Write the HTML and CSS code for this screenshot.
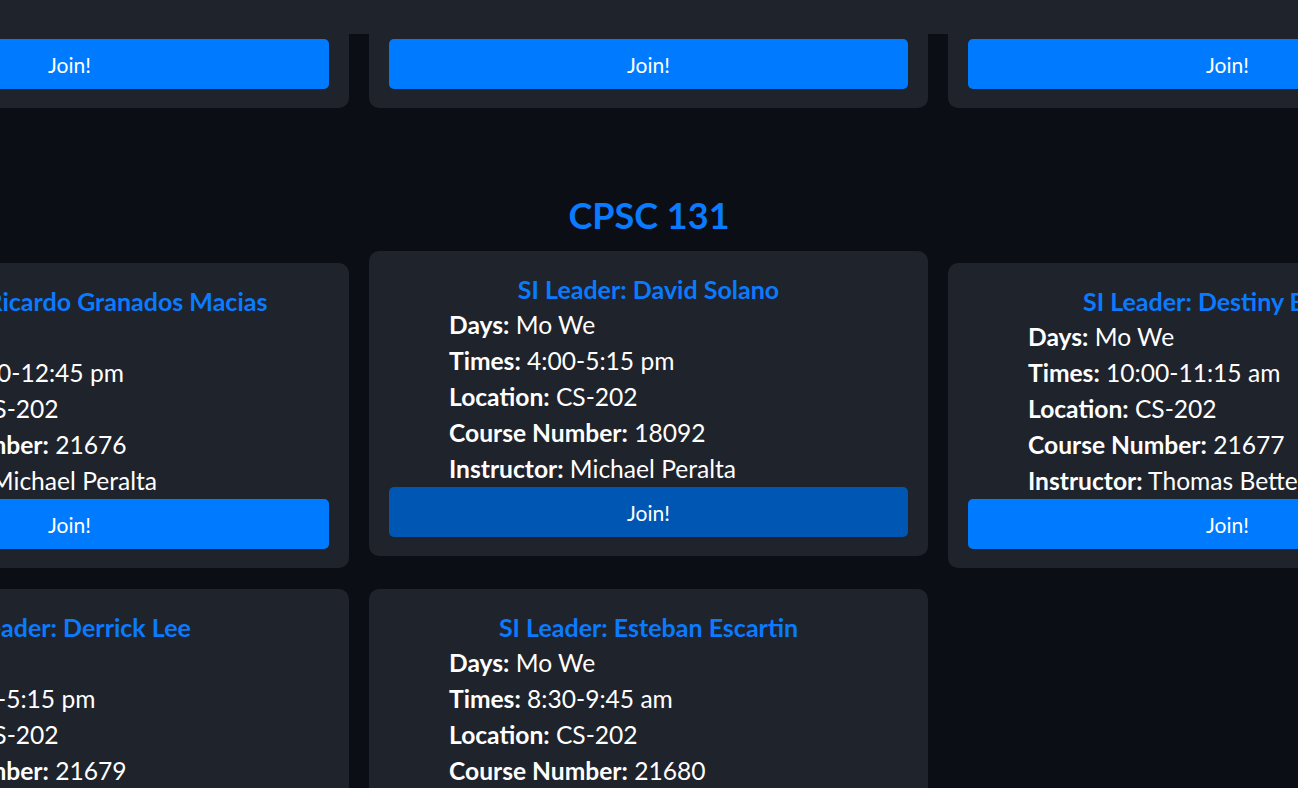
FILE: index.html
```html
<!DOCTYPE html>
<html lang="en">
<head>
<meta charset="utf-8">
<title>SI Sessions</title>
<link rel="stylesheet" href="styles.css">
</head>
<body>
<header class="topbar"></header>
<main class="page">
  <section class="course">
    <h2 class="course-title">CPSC 121</h2>
    <div class="grid">
      <div class="card">
        <h3 class="leader">SI Leader: Alex Nguyen</h3>
        <ul class="info">
          <li><b>Days:</b> Tu Th</li>
          <li><b>Times:</b> 1:00-2:15 pm</li>
          <li><b>Location:</b> CS-202</li>
          <li><b>Course Number:</b> 21670</li>
          <li><b>Instructor:</b> Doina Bein</li>
        </ul>
        <button class="join">Join!</button>
      </div>
      <div class="card">
        <h3 class="leader">SI Leader: Maria Lopez</h3>
        <ul class="info">
          <li><b>Days:</b> Mo We</li>
          <li><b>Times:</b> 2:30-3:45 pm</li>
          <li><b>Location:</b> CS-202</li>
          <li><b>Course Number:</b> 21671</li>
          <li><b>Instructor:</b> Paul Inventado</li>
        </ul>
        <button class="join">Join!</button>
      </div>
      <div class="card">
        <h3 class="leader">SI Leader: Kevin Tran</h3>
        <ul class="info">
          <li><b>Days:</b> Tu Th</li>
          <li><b>Times:</b> 8:30-9:45 am</li>
          <li><b>Location:</b> CS-202</li>
          <li><b>Course Number:</b> 21672</li>
          <li><b>Instructor:</b> Kenneth Kung</li>
        </ul>
        <button class="join">Join!</button>
      </div>
    </div>
  </section>

  <section class="course">
    <h2 class="course-title">CPSC 131</h2>
    <div class="grid">
      <div class="card">
        <h3 class="leader">SI Leader: Ricardo Granados Macias</h3>
        <ul class="info">
          <li><b>Days:</b> Tu Th</li>
          <li><b>Times:</b> 11:30-12:45 pm</li>
          <li><b>Location:</b> CS-202</li>
          <li><b>Course Number:</b> 21676</li>
          <li><b>Instructor:</b> Michael Peralta</li>
        </ul>
        <button class="join">Join!</button>
      </div>
      <div class="card is-hover">
        <h3 class="leader">SI Leader: David Solano</h3>
        <ul class="info">
          <li><b>Days:</b> Mo We</li>
          <li><b>Times:</b> 4:00-5:15 pm</li>
          <li><b>Location:</b> CS-202</li>
          <li><b>Course Number:</b> 18092</li>
          <li><b>Instructor:</b> Michael Peralta</li>
        </ul>
        <button class="join">Join!</button>
      </div>
      <div class="card">
        <h3 class="leader">SI Leader: Destiny Barrera</h3>
        <ul class="info">
          <li><b>Days:</b> Mo We</li>
          <li><b>Times:</b> 10:00-11:15 am</li>
          <li><b>Location:</b> CS-202</li>
          <li><b>Course Number:</b> 21677</li>
          <li><b>Instructor:</b> Thomas Bettens</li>
        </ul>
        <button class="join">Join!</button>
      </div>
      <div class="card">
        <h3 class="leader">SI Leader: Derrick Lee</h3>
        <ul class="info">
          <li><b>Days:</b> Tu Th</li>
          <li><b>Times:</b> 4:00-5:15 pm</li>
          <li><b>Location:</b> CS-202</li>
          <li><b>Course Number:</b> 21679</li>
          <li><b>Instructor:</b> Michael Peralta</li>
        </ul>
        <button class="join">Join!</button>
      </div>
      <div class="card">
        <h3 class="leader">SI Leader: Esteban Escartin</h3>
        <ul class="info">
          <li><b>Days:</b> Mo We</li>
          <li><b>Times:</b> 8:30-9:45 am</li>
          <li><b>Location:</b> CS-202</li>
          <li><b>Course Number:</b> 21680</li>
          <li><b>Instructor:</b> Michael Peralta</li>
        </ul>
        <button class="join">Join!</button>
      </div>
    </div>
  </section>
</main>
</body>
</html>
```
FILE: styles.css
```css
html, body {
  overflow-x: hidden;
}
body {
  margin: 0;
  background: #0c0e15;
  color: #ffffff;
  font-family: "Lato", "Open Sans", sans-serif;
}
.topbar {
  position: fixed;
  top: 0;
  left: 0;
  right: 0;
  height: 34px;
  background: #1f232b;
  z-index: 10;
}
.page {
  margin-top: -352px;
  padding-bottom: 40px;
}
.course {
  padding-top: 83px;
}
.course-title {
  margin: 0 0 24px;
  text-align: center;
  font-size: 36px;
  line-height: 48px;
  font-weight: 700;
  color: #0a7bff;
}
.grid {
  display: grid;
  grid-template-columns: repeat(3, 559px);
  gap: 21px 20px;
  justify-content: center;
  margin-right: 1px;
}
.card {
  background: #1f232b;
  border-radius: 10px;
  padding: 20px 20px 19px;
  display: flex;
  flex-direction: column;
}
.card.is-hover {
  transform: translateY(-12px);
}
.leader {
  margin: 0;
  text-align: center;
  font-size: 25px;
  line-height: 36px;
  font-weight: 700;
  color: #0a7bff;
}
.info {
  list-style: none;
  margin: 0;
  padding: 0 0 0 60px;
  font-size: 24.6px;
  line-height: 36px;
}
.info b {
  font-weight: 700;
}
.join {
  height: 50px;
  border: 0;
  border-radius: 5px;
  background: #007bff;
  color: #ffffff;
  font-family: inherit;
  font-size: 21px;
  cursor: pointer;
}
.card.is-hover .join {
  background: #0056b3;
}
```
